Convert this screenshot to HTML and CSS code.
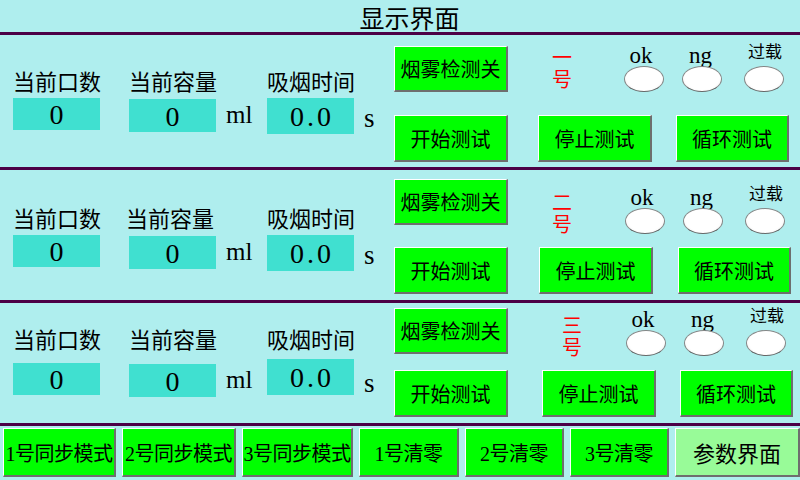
FILE: index.html
```html
<!DOCTYPE html>
<html lang="zh-CN">
<head>
<meta charset="utf-8">
<title>显示界面</title>
<link rel="stylesheet" href="styles.css">
</head>
<body>
<div class="screen">
  <header class="title">显示界面</header>
  <div class="rule"></div>

  <section class="panel p1">
    <div class="readouts">
      <div class="field"><div class="label">当前口数</div><div class="valrow"><div class="value">0</div></div></div>
      <div class="field"><div class="label">当前容量</div><div class="valrow"><div class="value v2">0</div><span class="unit">ml</span></div></div>
      <div class="field"><div class="label">吸烟时间</div><div class="valrow"><div class="value tall">0.0</div><span class="unit s">s</span></div></div>
    </div>
    <div class="controls">
      <div class="ctl-top">
        <button class="btn">烟雾检测关</button>
        <div class="station">一号</div>
        <div class="lamps">
          <div class="lamp"><span class="lamp-label">ok</span><span class="oval"></span></div>
          <div class="lamp ng"><span class="lamp-label">ng</span><span class="oval"></span></div>
          <div class="lamp ov"><span class="lamp-label small">过载</span><span class="oval"></span></div>
        </div>
      </div>
      <div class="ctl-bottom">
        <button class="btn">开始测试</button>
        <button class="btn b2">停止测试</button>
        <button class="btn b3">循环测试</button>
      </div>
    </div>
  </section>
  <div class="rule"></div>

  <section class="panel p2">
    <div class="readouts">
      <div class="field"><div class="label">当前口数</div><div class="valrow"><div class="value">0</div></div></div>
      <div class="field"><div class="label shift">当前容量</div><div class="valrow"><div class="value v2">0</div><span class="unit">ml</span></div></div>
      <div class="field"><div class="label">吸烟时间</div><div class="valrow"><div class="value tall">0.0</div><span class="unit s">s</span></div></div>
    </div>
    <div class="controls">
      <div class="ctl-top">
        <button class="btn">烟雾检测关</button>
        <div class="station">二号</div>
        <div class="lamps">
          <div class="lamp"><span class="lamp-label">ok</span><span class="oval"></span></div>
          <div class="lamp ng"><span class="lamp-label">ng</span><span class="oval"></span></div>
          <div class="lamp ov"><span class="lamp-label small">过载</span><span class="oval"></span></div>
        </div>
      </div>
      <div class="ctl-bottom">
        <button class="btn">开始测试</button>
        <button class="btn b2">停止测试</button>
        <button class="btn b3">循环测试</button>
      </div>
    </div>
  </section>
  <div class="rule"></div>

  <section class="panel p3">
    <div class="readouts">
      <div class="field"><div class="label">当前口数</div><div class="valrow"><div class="value">0</div></div></div>
      <div class="field"><div class="label">当前容量</div><div class="valrow"><div class="value v2">0</div><span class="unit">ml</span></div></div>
      <div class="field"><div class="label">吸烟时间</div><div class="valrow"><div class="value tall up">0.0</div><span class="unit s">s</span></div></div>
    </div>
    <div class="controls">
      <div class="ctl-top">
        <button class="btn">烟雾检测关</button>
        <div class="station">三号</div>
        <div class="lamps">
          <div class="lamp"><span class="lamp-label">ok</span><span class="oval"></span></div>
          <div class="lamp ng"><span class="lamp-label">ng</span><span class="oval"></span></div>
          <div class="lamp ov"><span class="lamp-label small">过载</span><span class="oval"></span></div>
        </div>
      </div>
      <div class="ctl-bottom">
        <button class="btn">开始测试</button>
        <button class="btn b2">停止测试</button>
        <button class="btn b3">循环测试</button>
      </div>
    </div>
  </section>
  <div class="rule"></div>

  <nav class="bottombar">
    <button class="btn nav w1">1号同步模式</button>
    <button class="btn nav w2">2号同步模式</button>
    <button class="btn nav w3">3号同步模式</button>
    <button class="btn nav w4">1号清零</button>
    <button class="btn nav w5">2号清零</button>
    <button class="btn nav w6">3号清零</button>
    <button class="btn nav w7 params">参数界面</button>
  </nav>
</div>
</body>
</html>
```

FILE: styles.css
```css
html, body {
  margin: 0;
  padding: 0;
}

body {
  width: 800px;
  height: 480px;
  overflow: hidden;
  background: #afeeee;
  font-family: "Liberation Serif", "Noto Sans CJK SC", serif;
  color: #000;
}

.screen {
  width: 800px;
  height: 480px;
  display: flex;
  flex-direction: column;
}

.title {
  height: 32px;
  line-height: 34px;
  font-size: 25px;
  text-align: center;
  padding-left: 19px;
  font-family: "Noto Sans CJK SC", sans-serif;
}

.rule {
  height: 3px;
  background: #4c0046;
  flex: 0 0 3px;
}

/* ---------- station panels ---------- */
.panel {
  display: flex;
  flex: 0 0 auto;
}
.p1 { height: 132px; }
.p2 { height: 130px; }
.p3 { height: 120px; }

.readouts {
  flex: 0 0 394px;
  box-sizing: border-box;
  padding-left: 13px;
  display: grid;
  grid-template-columns: 116px 138px 127px;
  align-content: start;
}
.p1 .readouts { padding-top: 33px; }
.p2 .readouts { padding-top: 35px; }
.p3 .readouts { padding-top: 23px; }

.field {
  display: flex;
  flex-direction: column;
}

.label {
  font-family: "Noto Sans CJK SC", sans-serif;
  font-size: 22px;
  line-height: 24px;
  height: 24px;
  white-space: nowrap;
}
.label.shift { margin-left: -3px; }

.valrow {
  display: flex;
  align-items: flex-start;
  margin-top: 6px;
}
.p3 .valrow { margin-top: 13px; }

.value {
  width: 87px;
  height: 32px;
  line-height: 34px;
  background: #40e0d0;
  text-align: center;
  font-size: 28px;
}
.value.v2 {
  margin-top: 1px;
  height: 33px;
  line-height: 35px;
}
.value.tall {
  height: 36px;
  line-height: 38px;
  letter-spacing: 3px;
  text-indent: 3px;
}
.value.up { margin-top: -4px; }

.unit {
  margin-left: 10px;
  font-size: 25px;
  line-height: 34px;
  height: 34px;
}
.unit.s {
  font-size: 27px;
  line-height: 40px;
}

.controls {
  flex: 1 1 auto;
  display: flex;
  flex-direction: column;
}
.p1 .controls { padding-top: 11px; }
.p2 .controls { padding-top: 9px; }
.p3 .controls { padding-top: 5px; }

.ctl-top {
  display: flex;
  align-items: flex-start;
  height: 46px;
}

.btn {
  box-sizing: border-box;
  width: 114px;
  height: 47px;
  margin: 0;
  padding: 0;
  background: #00ff00;
  border-style: solid;
  border-width: 1px 2px 2px 1px;
  border-color: #ffffff #6e6e6e #6e6e6e #ffffff;
  font-family: "Liberation Serif", "Noto Sans CJK SC", serif;
  font-size: 20px;
  color: #000;
  text-align: center;
  white-space: nowrap;
  overflow: visible;
}
.ctl-top .btn { height: 46px; }

.station {
  width: 20px;
  color: #ff0000;
  font-family: "Noto Sans CJK SC", sans-serif;
  font-size: 20px;
  line-height: 22px;
  margin-left: 44px;
}
.p1 .station { margin-top: 0; }
.p2 .station { margin-top: 12px; }
.p3 .station { margin-top: 6px; margin-left: 54px; }

.lamps {
  display: flex;
  align-items: flex-start;
  margin-left: 52px;
}
.p2 .lamps { margin-left: 53px; margin-top: 9px; }
.p3 .lamps { margin-left: 44px; margin-top: 2px; }

.lamp {
  display: flex;
  flex-direction: column;
  align-items: center;
  width: 40px;
}
.lamp.ng { margin-left: 18px; }
.lamp.ov { margin-left: 22px; }

.lamp-label {
  height: 20px;
  line-height: 20px;
  font-size: 23px;
  white-space: nowrap;
  margin-right: 6px;
}
.lamp.ng .lamp-label { margin-right: 3px; }
.lamp-label.small {
  font-family: "Noto Sans CJK SC", sans-serif;
  font-size: 17px;
  line-height: 10px;
  margin-right: 0;
  padding-left: 2px;
}

.oval {
  box-sizing: border-box;
  width: 40px;
  height: 26px;
  border-radius: 50%;
  border: 1.5px solid #858585;
  border-bottom-color: #666666;
  background: radial-gradient(ellipse at 50% 40%, #ffffff 64%, #e6e6e6 100%);
}

.ctl-bottom {
  display: flex;
  align-items: flex-start;
}
.p1 .ctl-bottom { margin-top: 23px; }
.p2 .ctl-bottom { margin-top: 22px; }
.p3 .ctl-bottom { margin-top: 16px; }

.ctl-bottom .b2 { margin-left: 30px; }
.ctl-bottom .b3 { margin-left: 24px; width: 113px; }
.p2 .ctl-bottom .b2 { margin-left: 31px; }
.p2 .ctl-bottom .b3 { margin-left: 25px; }
.p3 .ctl-bottom .b2 { margin-left: 34px; }

/* ---------- bottom navigation ---------- */
.bottombar {
  flex: 1 1 auto;
  display: flex;
  align-items: flex-start;
  gap: 6px;
  padding: 2px 0 0 3px;
}

.btn.nav {
  height: 49px;
  font-size: 20px;
  letter-spacing: -0.5px;
}
.w1 { width: 113px !important; }
.w2 { width: 114px !important; }
.w3 { width: 111px !important; }
.w4 { width: 100px !important; }
.w5 { width: 99px !important; }
.w6 { width: 99px !important; }
.w7 { width: 125px !important; }

.btn.params {
  background: #98fb98;
  font-size: 22px;
  letter-spacing: 0;
}
```
